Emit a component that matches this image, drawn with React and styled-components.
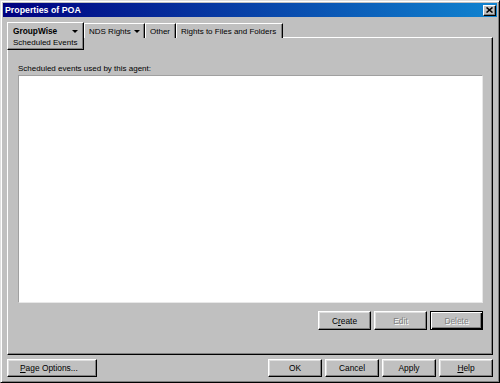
import styled, { createGlobalStyle } from "styled-components";

const GlobalStyle = createGlobalStyle`
  html, body {
    margin: 0;
    padding: 0;
    background: #c0c0c0;
  }
  * {
    box-sizing: border-box;
  }
`;

const Window = styled.div`
  width: 500px;
  height: 383px;
  display: flex;
  flex-direction: column;
  background: #c0c0c0;
  border: 1px solid;
  border-color: #dfdfdf #000 #000 #dfdfdf;
  box-shadow: inset 1px 1px #fff, inset -1px -1px #808080;
  padding: 2px;
  font-family: "Liberation Sans", Arial, sans-serif;
  font-size: 8px;
  color: #000;
`;

const TitleBar = styled.div`
  height: 14px;
  display: flex;
  align-items: center;
  justify-content: space-between;
  padding: 0 1px 0 2px;
  background: linear-gradient(to right, #000080, #1084d0);
  color: #fff;
  font-weight: bold;
  font-size: 8.8px;
`;

const CloseButton = styled.div`
  width: 13px;
  height: 11px;
  display: flex;
  align-items: center;
  justify-content: center;
  background: #c0c0c0;
  border: 1px solid;
  border-color: #fff #000 #000 #fff;
  box-shadow: inset -1px -1px #808080;
`;

const Body = styled.div`
  flex: 1;
  display: flex;
  flex-direction: column;
  padding: 5px 4px 0 4px;
`;

const TabStrip = styled.div`
  height: 15px;
  display: flex;
  align-items: flex-start;
`;

const Tab = styled.div`
  height: ${p => (p.$active ? "28px" : "15px")};
  margin-top: ${p => (p.$active ? "0" : "1px")};
  display: flex;
  flex-direction: column;
  justify-content: ${p => (p.$active ? "flex-start" : "center")};
  padding: ${p => (p.$active ? "3px 5px 0 5px" : "0 4px")};
  width: ${p => p.$w}px;
  background: #c0c0c0;
  border-top: 1px solid #fff;
  border-left: 1px solid #fff;
  border-right: 1px solid #000;
  border-bottom: ${p => (p.$active ? "1px solid #000" : "none")};
  box-shadow: inset -1px 0 #808080${p => (p.$active ? ", inset 0 -1px #808080" : "")};
  position: relative;
  z-index: ${p => (p.$active ? 2 : 0)};
  white-space: nowrap;
`;

const TabLabel = styled.div`
  display: flex;
  align-items: center;
  justify-content: space-between;
  gap: 3px;
  height: 10px;
  font-weight: ${p => (p.$bold ? "bold" : "normal")};
  font-size: ${p => (p.$bold ? "8.3px" : "8px")};

  svg {
    flex-shrink: 0;
  }
`;

const SubLabel = styled.div`
  height: 11px;
  line-height: 11px;
  margin-top: 1px;
`;

const Arrow = () => (
  <svg width="6" height="3" viewBox="0 0 6 3">
    <polygon points="0,0 6,0 3,3" fill="#000" />
  </svg>
);

const Panel = styled.div`
  height: 318px;
  width: 486px;
  display: flex;
  flex-direction: column;
  border: 1px solid;
  border-color: #fff #000 #000 #fff;
  box-shadow: inset -1px -1px #808080;
  padding: 26px 10px 0 10px;
`;

const FieldLabel = styled.div`
  height: 10px;
  line-height: 10px;
  margin-bottom: 1px;
`;

const ListBox = styled.div`
  height: 228px;
  width: 465px;
  background: #fff;
  border: 1px solid;
  border-color: #a0a0a0 #e8e8e8 #e8e8e8 #a0a0a0;
`;

const ButtonRow = styled.div`
  display: flex;
  justify-content: flex-end;
  gap: 3px;
  margin-top: 8px;
  width: 465px;
`;

const Button = styled.div`
  width: ${p => p.$w || 53}px;
  height: ${p => p.$h || 19}px;
  display: flex;
  align-items: center;
  justify-content: ${p => (p.$left ? "flex-start" : "center")};
  padding-left: ${p => p.$pl || 0}px;
  background: #c0c0c0;
  border: 1px solid;
  border-color: ${p => (p.$default ? "#000" : "#fff #000 #000 #fff")};
  box-shadow: ${p =>
    p.$default
      ? "inset 1px 1px #fff, inset -1px -1px #000, inset -2px -2px #808080"
      : "inset -1px -1px #808080, inset 1px 1px #dfdfdf"};
  color: ${p => (p.$disabled ? "#808080" : "#000")};
  text-shadow: ${p => (p.$disabled ? "1px 1px 0 #fff" : "none")};
  font-size: 8.4px;
`;

const Footer = styled.div`
  display: flex;
  align-items: center;
  margin-top: 4px;
`;

const FooterRight = styled.div`
  margin-left: auto;
  display: flex;
  gap: 3px;
`;

export default function App() {
  return (
    <>
      <GlobalStyle />
      <Window>
        <TitleBar>
          <span>Properties of POA</span>
          <CloseButton>
            <svg width="7" height="6" viewBox="0 0 7 6">
              <path d="M0.5 0.5 L6.5 5.5 M6.5 0.5 L0.5 5.5" stroke="#000" strokeWidth="1.6" />
            </svg>
          </CloseButton>
        </TitleBar>
        <Body>
          <TabStrip>
            <Tab $active $w={77}>
              <TabLabel $bold>
                GroupWise <Arrow />
              </TabLabel>
              <SubLabel>Scheduled Events</SubLabel>
            </Tab>
            <Tab $w={61}>
              <TabLabel>
                NDS Rights <Arrow />
              </TabLabel>
            </Tab>
            <Tab $w={31}>
              <TabLabel>Other</TabLabel>
            </Tab>
            <Tab $w={107}>
              <TabLabel>Rights to Files and Folders</TabLabel>
            </Tab>
          </TabStrip>
          <Panel>
            <FieldLabel>Scheduled events used by this agent:</FieldLabel>
            <ListBox />
            <ButtonRow>
              <Button>
                C<u>r</u>eate
              </Button>
              <Button $disabled>Edit</Button>
              <Button $disabled $default>
                Delete
              </Button>
            </ButtonRow>
          </Panel>
          <Footer>
            <Button $w={90} $h={18} $left $pl={12}>
              <u>P</u>age Options...
            </Button>
            <FooterRight>
              <Button $w={54} $h={18}>OK</Button>
              <Button $w={54} $h={18}>Cancel</Button>
              <Button $w={54} $h={18}>Apply</Button>
              <Button $w={54} $h={18}>
                <u>H</u>elp
              </Button>
            </FooterRight>
          </Footer>
        </Body>
      </Window>
    </>
  );
}
